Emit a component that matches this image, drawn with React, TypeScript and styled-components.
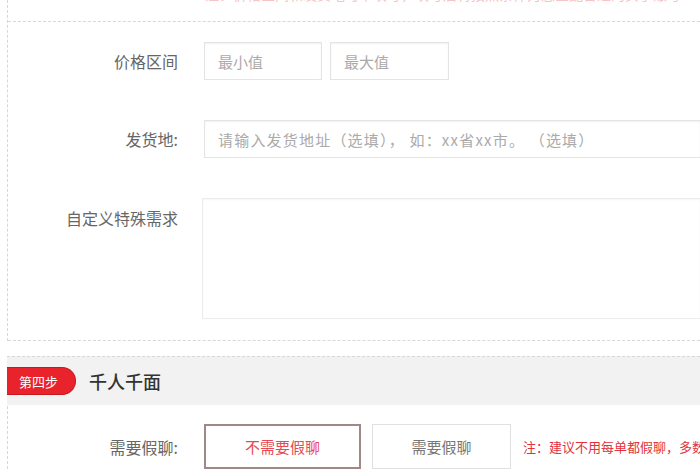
import styled, { createGlobalStyle } from "styled-components"

const GlobalStyle = createGlobalStyle`
  html, body {
    margin: 0;
    padding: 0;
    background: #ffffff;
    overflow: hidden;
  }
  body {
    font-family: "Noto Sans CJK SC", "Noto Sans", sans-serif;
  }
`

const Page = styled.div`
  width: 700px;
  height: 470px;
  overflow: hidden;
  background: #fff;
`

const Section = styled.div`
  margin-left: 7px;
  border-left: 1px dashed #d6d6dc;
`

const TopStrip = styled.div`
  height: 21px;
  overflow: hidden;
  border-bottom: 1px dashed #d6d6dc;
  padding-left: 197px;
`

const FadedHint = styled.div`
  margin-top: -16px;
  font-size: 14px;
  color: #f6c4c4;
  white-space: nowrap;
`

const Form = styled.div`
  display: flex;
  flex-direction: column;
  gap: 40px;
  padding: 20px 0 21px;
  border-bottom: 1px dashed #d6d6dc;
`

const Row = styled.div<{ $top?: boolean }>`
  display: flex;
  align-items: ${(p) => (p.$top ? "flex-start" : "center")};
  gap: 26px;
`

const Label = styled.div<{ $offset?: number }>`
  width: 170px;
  flex-shrink: 0;
  text-align: right;
  font-size: 16px;
  color: #666;
  padding-top: ${(p) => p.$offset ?? 0}px;
`

const Inputs = styled.div`
  display: flex;
  gap: 8px;
  flex: 1;
`

const Field = styled.div<{ $width?: number }>`
  box-sizing: border-box;
  width: ${(p) => (p.$width ? `${p.$width}px` : "auto")};
  flex: ${(p) => (p.$width ? "none" : "1")};
  height: 38px;
  border: 1px solid #e4e4e4;
  border-right: ${(p) => (p.$width ? "1px solid #e4e4e4" : "none")};
  box-shadow: inset 0 1px 2px rgba(0, 0, 0, 0.06);
  padding-left: 13px;
  display: flex;
  align-items: center;
  font-size: 15px;
  letter-spacing: ${(p) => (p.$width ? "0" : "1.2px")};
  color: #aaa;
  white-space: pre;
  overflow: hidden;
`

const TextArea = styled.div`
  flex: 1;
  height: 119px;
  margin-left: -2px;
  border: 1px solid #ececec;
  border-right: none;
  box-shadow: inset 0 1px 2px rgba(0, 0, 0, 0.04);
`

const StepSection = styled.div`
  margin-top: 15px;
  margin-left: 7px;
  border-left: 1px dashed #d6d6dc;
`

const StepHeader = styled.div`
  height: 48px;
  background: #f2f2f2;
  border-top: 1px dashed #d6d6dc;
  display: flex;
  align-items: center;
  gap: 13px;
  margin-left: -1px;
`

const Badge = styled.div`
  width: 69px;
  height: 28px;
  box-sizing: border-box;
  background: #e8232b;
  border: 1px solid #c9171f;
  border-left: none;
  border-radius: 0 15px 15px 0;
  color: #fff;
  font-size: 13px;
  display: flex;
  align-items: center;
  padding-left: 12px;
`

const StepTitle = styled.div`
  font-size: 18px;
  color: #333;
  font-weight: 500;
`

const ChoiceRow = styled.div`
  display: flex;
  align-items: center;
  padding-top: 19px;
  overflow: hidden;
`

const ChoiceLabel = styled(Label)`
  width: 170px;
  margin-right: 26px;
`

const Choice = styled.div<{ $active?: boolean; $width: number }>`
  box-sizing: border-box;
  flex-shrink: 0;
  width: ${(p) => p.$width}px;
  height: 45px;
  margin-right: 11px;
  border: ${(p) => (p.$active ? "2px solid #a08888" : "1px solid #e0e0e0")};
  color: ${(p) => (p.$active ? "#e84a55" : "#777")};
  font-size: 15px;
  display: flex;
  align-items: center;
  justify-content: center;
  background: #fff;
`

const Note = styled.div`
  font-size: 13px;
  color: #e3323c;
  white-space: nowrap;
  margin-left: 1px;
`

export default function App() {
  return (
    <Page>
      <GlobalStyle />
      <Section>
        <TopStrip>
          <FadedHint>注：价格区间和发货地可不填写，填写后将按照条件为您匹配合适的买手账号</FadedHint>
        </TopStrip>
        <Form>
          <Row>
            <Label>价格区间</Label>
            <Inputs>
              <Field $width={118}>最小值</Field>
              <Field $width={119}>最大值</Field>
            </Inputs>
          </Row>
          <Row>
            <Label>发货地:</Label>
            <Field>{"请输入发货地址（选填）， 如：xx省xx市。 （选填）"}</Field>
          </Row>
          <Row $top>
            <Label $offset={8}>自定义特殊需求</Label>
            <TextArea />
          </Row>
        </Form>
      </Section>
      <StepSection>
        <StepHeader>
          <Badge>第四步</Badge>
          <StepTitle>千人千面</StepTitle>
        </StepHeader>
        <ChoiceRow>
          <ChoiceLabel>需要假聊:</ChoiceLabel>
          <Choice $active $width={157}>不需要假聊</Choice>
          <Choice $width={139}>需要假聊</Choice>
          <Note>注：建议不用每单都假聊，多数买家下单不会咨询客服</Note>
        </ChoiceRow>
      </StepSection>
    </Page>
  )
}
